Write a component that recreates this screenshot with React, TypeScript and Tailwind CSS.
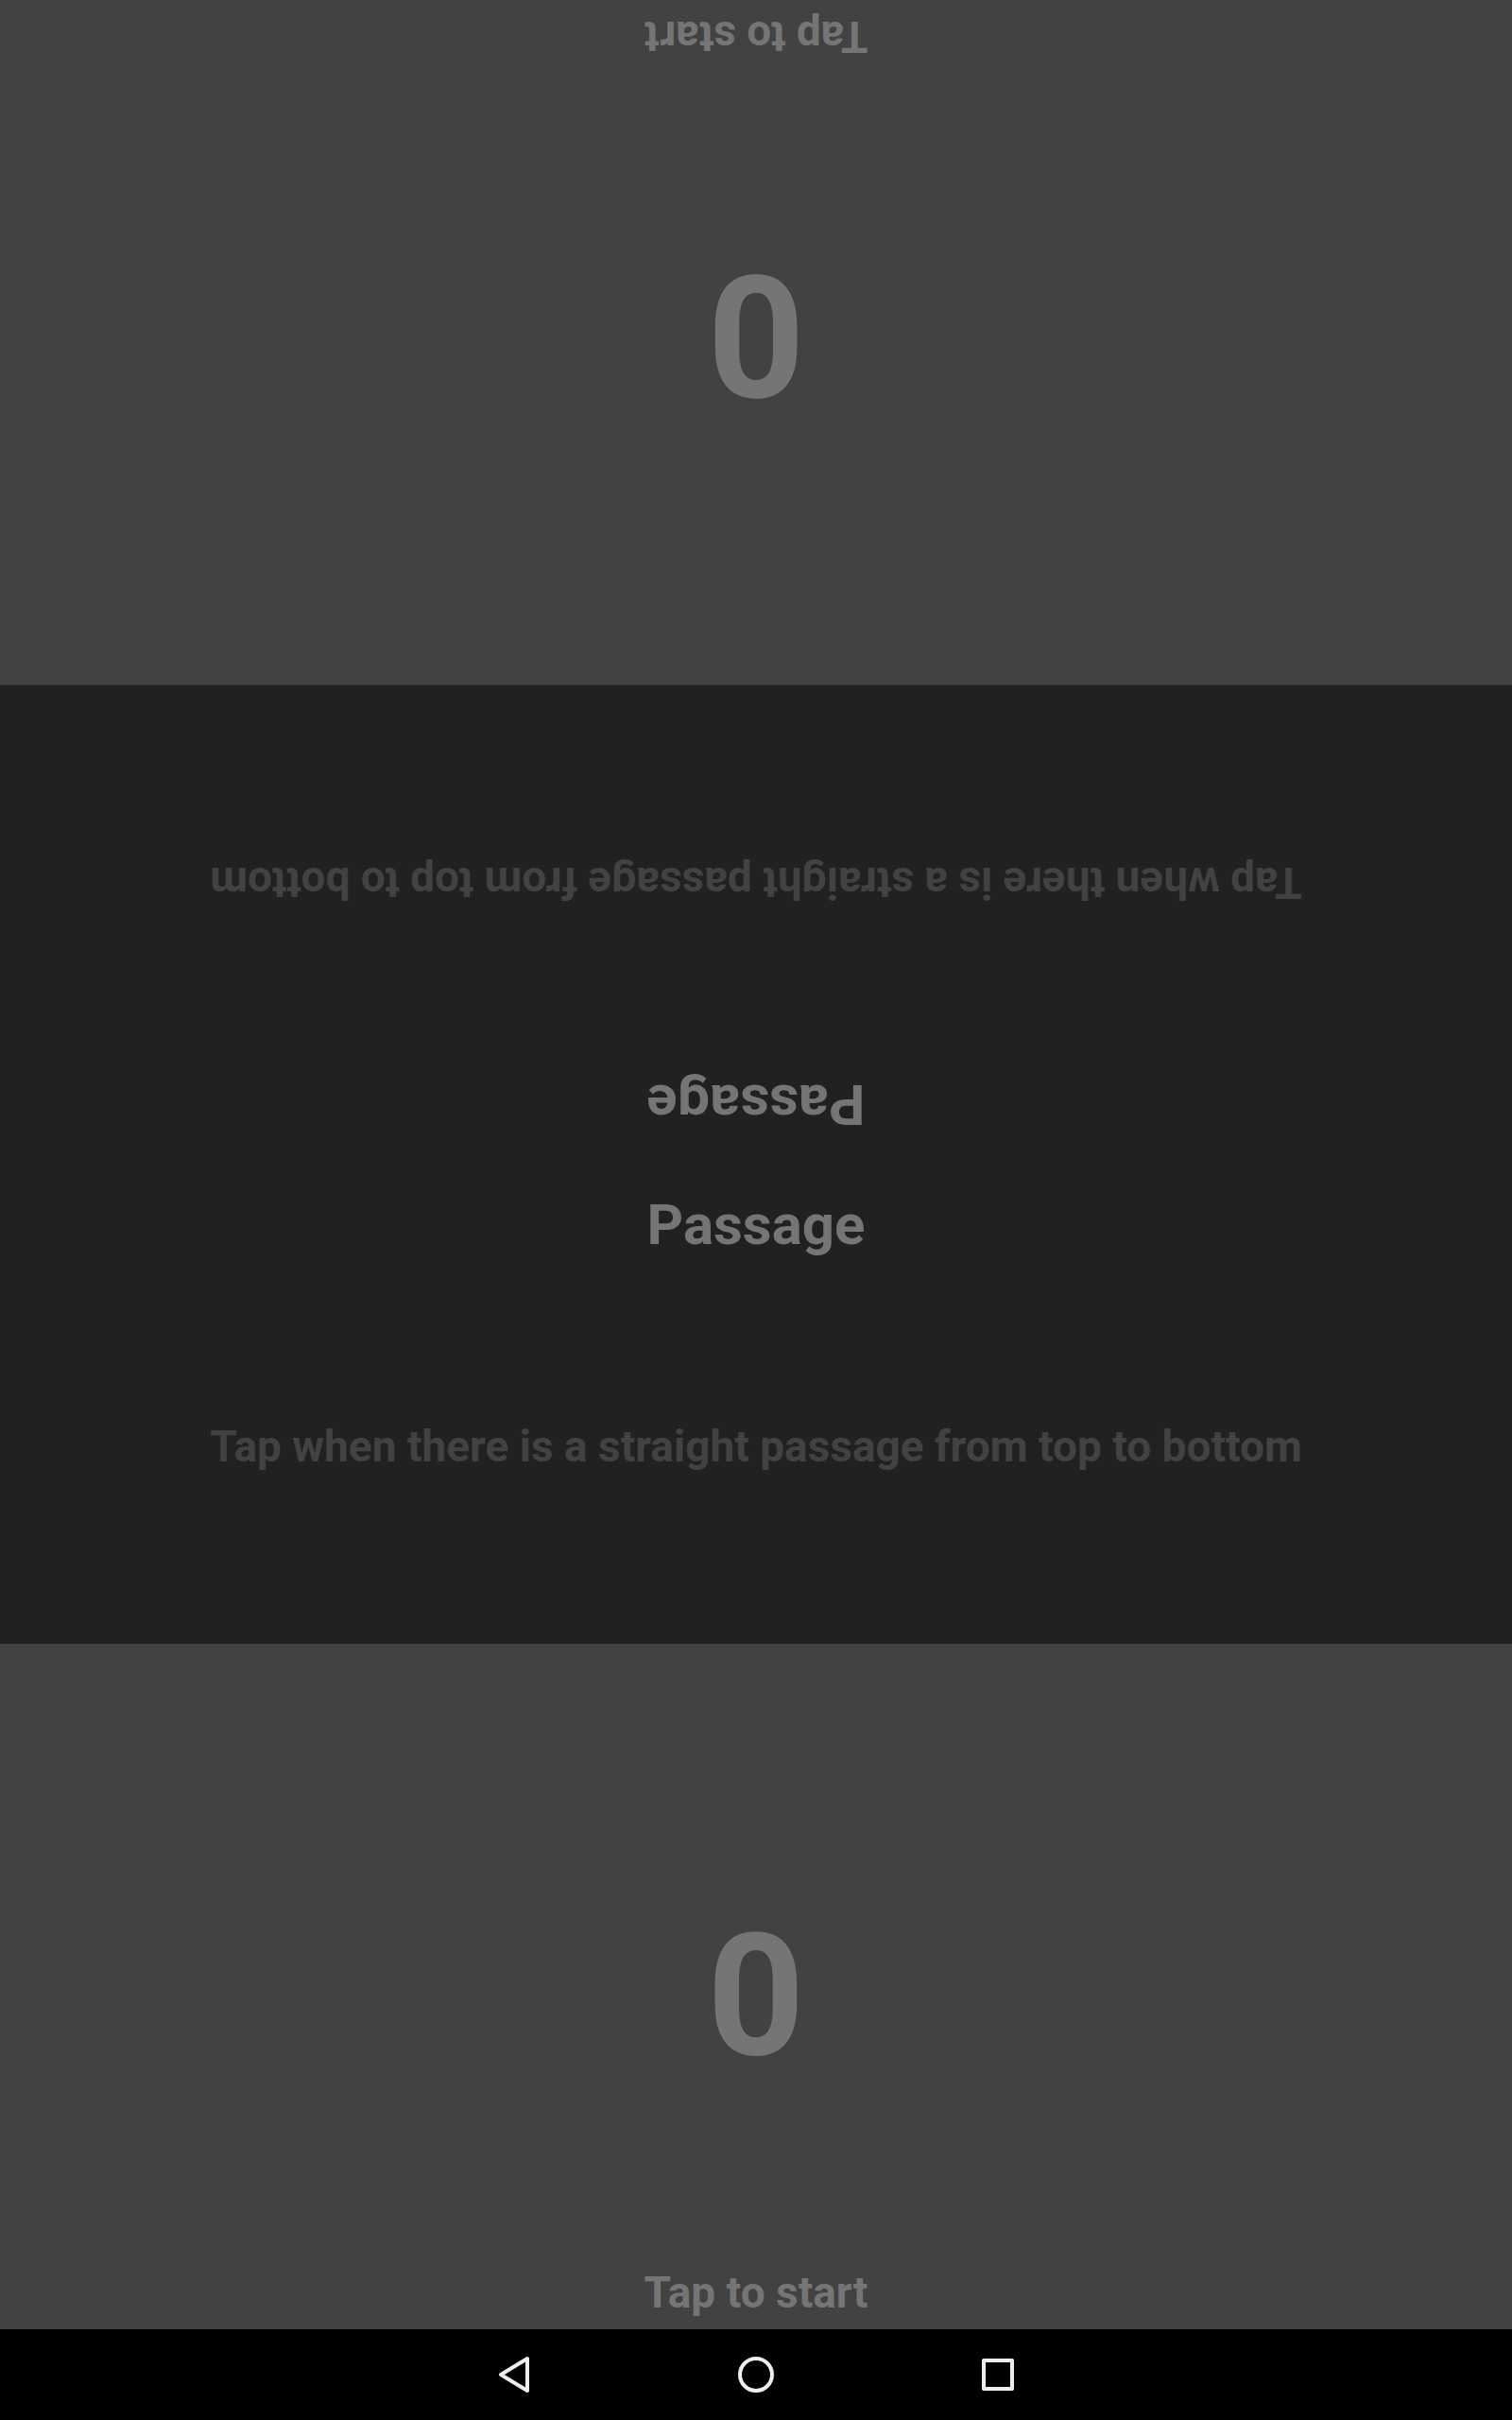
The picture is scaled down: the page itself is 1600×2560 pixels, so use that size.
import React from "react";

function PlayerPad({ score, flipped }: { score: number; flipped?: boolean }) {
  return (
    <button
      type="button"
      className={`grid w-full grid-rows-[1fr_auto] justify-items-center bg-[#424242] pt-[86px] pb-3 font-bold text-[#757575] ${flipped ? "rotate-180" : ""}`}
    >
      <span className="self-center text-[180px] leading-[212px]">{score}</span>
      <span className="text-[46px] leading-[54px]">Tap to start</span>
    </button>
  );
}

function Instructions({ flipped }: { flipped?: boolean }) {
  return (
    <section className={`flex flex-col items-center font-bold ${flipped ? "rotate-180" : ""}`}>
      <h2 className="pt-7 text-[60px] leading-[72px] text-[#757575]">Passage</h2>
      <p className="flex flex-1 items-center pb-3 text-center text-[46px] leading-[54px] text-[#424242]">
        Tap when there is a straight passage from top to bottom
      </p>
    </section>
  );
}

function NavBar() {
  return (
    <nav className="flex h-24 items-center justify-center gap-52 bg-black text-[#eeeeee]">
      <button type="button" aria-label="Back" className="size-12">
        <svg viewBox="0 0 48 48" fill="none" stroke="currentColor" strokeWidth="4" strokeLinejoin="round">
          <path d="M38 7v34L10 24z" />
        </svg>
      </button>
      <button type="button" aria-label="Home" className="size-12">
        <svg viewBox="0 0 48 48" fill="none" stroke="currentColor" strokeWidth="4">
          <circle cx="24" cy="24" r="17" />
        </svg>
      </button>
      <button type="button" aria-label="Recent apps" className="size-12">
        <svg viewBox="0 0 48 48" fill="none" stroke="currentColor" strokeWidth="4" strokeLinejoin="round">
          <path d="M9 9h30v30H9z" />
        </svg>
      </button>
    </nav>
  );
}

export default function App() {
  return (
    <div className="flex min-h-screen flex-col bg-[#212121] font-['Roboto',sans-serif]">
      <main className="grid flex-1 grid-rows-[5fr_7fr_5fr]">
        <PlayerPad score={0} flipped />
        <div className="grid grid-rows-2">
          <Instructions flipped />
          <Instructions />
        </div>
        <PlayerPad score={0} />
      </main>
      <NavBar />
    </div>
  );
}
